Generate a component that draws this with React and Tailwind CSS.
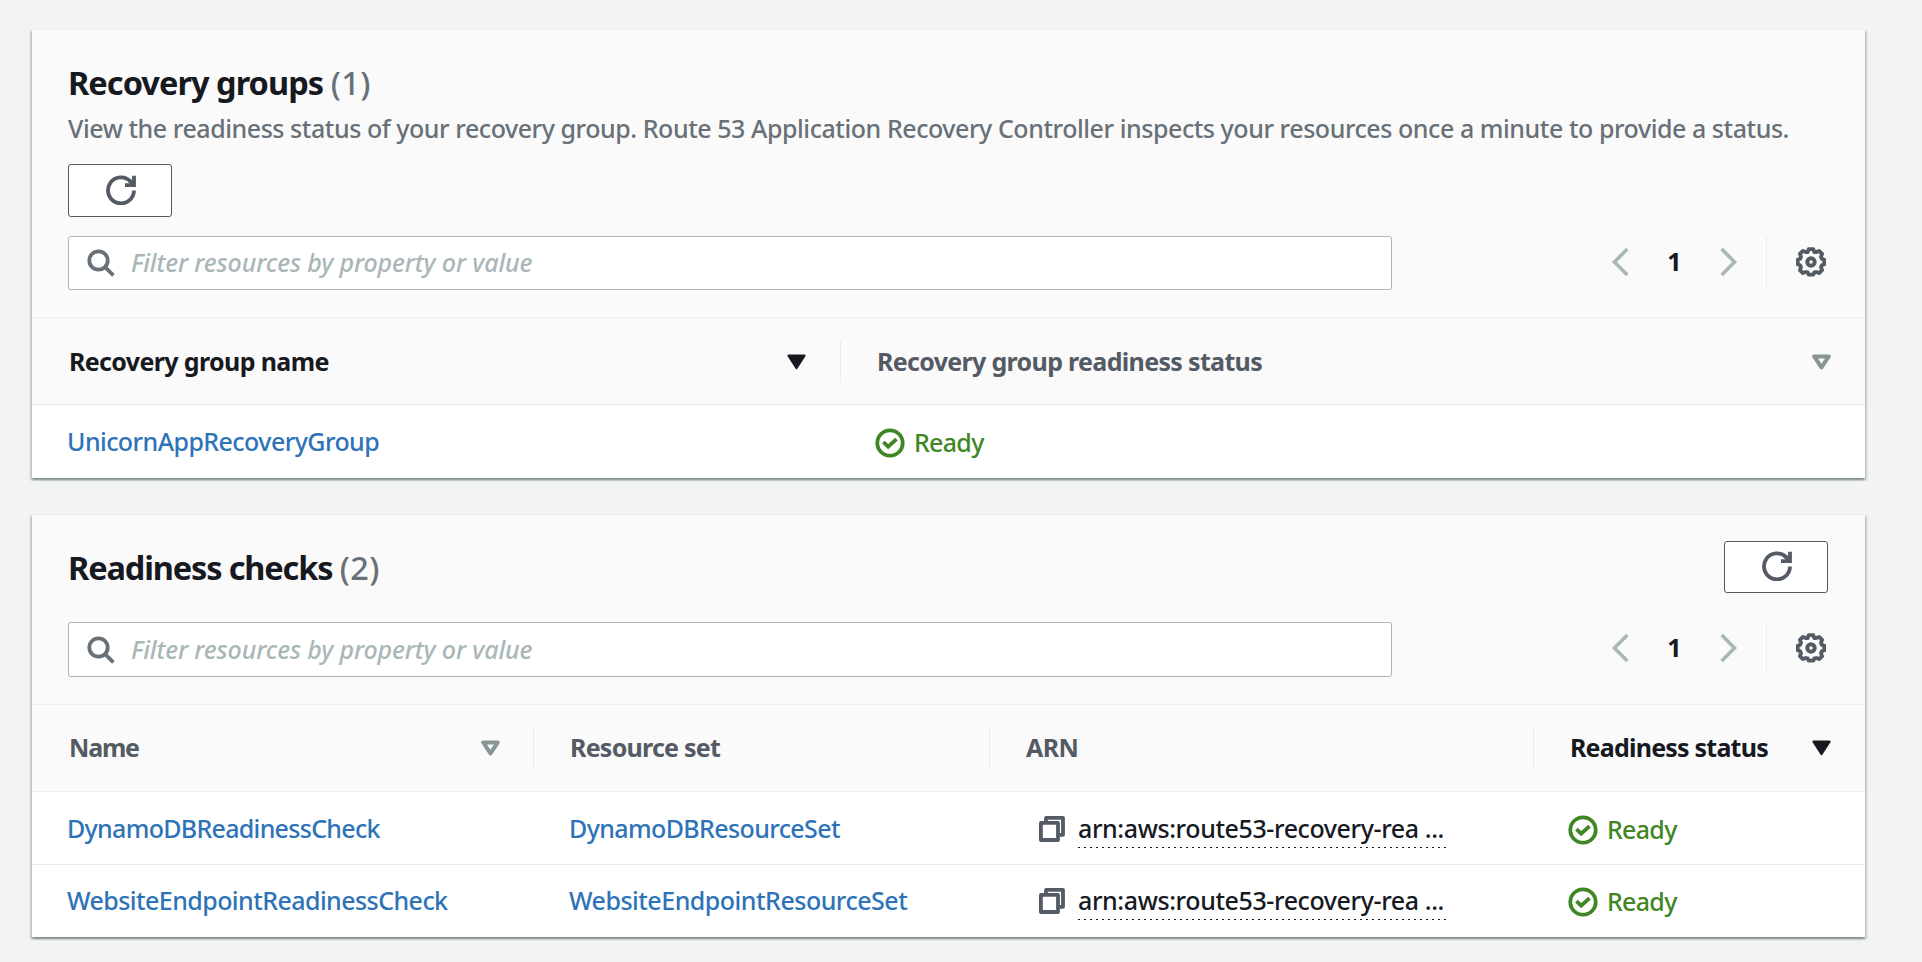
import React from "react";

function RefreshIcon() {
  return (
    <svg className="mb-px ml-px size-[30px]" viewBox="0 0 30 30" fill="none" stroke="#545b64" strokeWidth="3.8">
      <path d="M28 15.5A13 13 0 1 1 24.6 6.6" />
      <path d="M28 .8v9.4H19" />
      <path d="M23.4 5.2l4.3 4.6" />
    </svg>
  );
}

function SearchIcon() {
  return (
    <svg className="size-[28px] shrink-0" viewBox="0 0 28 28" fill="none" stroke="#687078" strokeWidth="3.8">
      <circle cx="11.5" cy="11.5" r="9.2" />
      <path d="M18 18l8.4 8.4" />
    </svg>
  );
}

function Chevron({ flip }) {
  return (
    <svg className="h-[30px] w-[18px]" viewBox="0 0 18 30" fill="none" stroke="#aab7b8" strokeWidth="3.6">
      <path d={flip ? "M1.7 2L14.5 15L1.7 28" : "M16.3 2L3.5 15L16.3 28"} />
    </svg>
  );
}

function GearIcon() {
  return (
    <svg className="size-[30px]" viewBox="0 0 30 30" fill="none" stroke="#545b64" strokeWidth="3.8" strokeLinejoin="round">
      <path d="M12.7 2.2h4.6l1 2.9 2-.1 2.8-1.1 3 3-1.1 2.8 .8 2.1 2.5 .9v4.6l-2.5 1-.8 2 1.1 2.8-3 3-2.8-1.1-2 .4-1 2.3h-4.6l-1-2.3-2-.4-2.8 1.1-3-3 1.1-2.8-.8-2-2.5-1v-4.6l2.5-.9.8-2.1-1.1-2.8 3-3 2.8 1.1 2 .1z" />
      <circle cx="15" cy="15" r="3.7" strokeWidth="4" />
    </svg>
  );
}

function SortIcon({ active }) {
  return active ? (
    <svg className="h-[16px] w-[19px] shrink-0" viewBox="0 0 19 16" fill="#16191f" stroke="#16191f" strokeWidth="2" strokeLinejoin="round">
      <path d="M1.4 1.6h16.2L9.5 14.3z" />
    </svg>
  ) : (
    <svg className="h-[16px] w-[19px] shrink-0" viewBox="0 0 19 16" fill="none" stroke="#879596" strokeWidth="4" strokeLinejoin="round">
      <path d="M2.2 2.4h14.6L9.5 13.4z" />
    </svg>
  );
}

function CheckIcon() {
  return (
    <svg className="size-[30px] shrink-0" viewBox="0 0 30 30" fill="none" stroke="#3f8624" strokeWidth="3.8">
      <circle cx="15" cy="15" r="12.7" />
      <path d="M8.4 14.1l4.8 4.6 8.3-7.6" strokeWidth="3.8" />
    </svg>
  );
}

function CopyIcon() {
  return (
    <svg className="size-[26px] shrink-0" viewBox="0 0 26 26" fill="none" stroke="#545b64" strokeWidth="3.8" strokeLinejoin="round">
      <path d="M7 6.6V1.9H24V18.8H19.4" />
      <path d="M1.9 6.9H19V24H1.9z" />
    </svg>
  );
}

function RefreshButton({ className }) {
  return (
    <button className={"flex w-[104px] items-center justify-center rounded-[3px] border border-[#545b64] bg-white " + className}>
      <RefreshIcon />
    </button>
  );
}

function FilterBar({ className = "", inputCls = "h-[54px]" }) {
  return (
    <div className={"flex items-start justify-between " + className}>
      <div className={"flex w-[1324px] items-center gap-[16px] rounded-[3px] border border-[#aab7b8] bg-white pl-[18px] " + inputCls}>
        <SearchIcon />
        <span className="text-[25px] font-medium italic tracking-[-0.13px] text-[#aab7b8]">Filter resources by property or value</span>
      </div>
      <div className="flex h-[52px] items-center pr-[3px]">
        <Chevron />
        <span className="w-[91px] text-center text-[25px] font-bold text-[#16191f]">1</span>
        <Chevron flip />
        <span className="ml-[28px] mr-[29px] h-[52px] w-px bg-[#eaeded]" />
        <GearIcon />
      </div>
    </div>
  );
}

function Card({ children, className = "" }) {
  return (
    <section className={"w-[1833px] bg-white shadow-[0_2px_2px_0_rgba(0,28,36,0.3),2px_2px_2px_0_rgba(0,28,36,0.15),-2px_2px_2px_0_rgba(0,28,36,0.15)] " + className}>
      {children}
    </section>
  );
}

function Th({ children, className = "", active, sortable, first }) {
  return (
    <div className={"flex h-[43px] items-center justify-between whitespace-nowrap text-[25px] font-bold " + (active ? "text-[#16191f] " : "text-[#545b64] ") + (first ? "pl-[37px] " : "border-l border-[#eaeded] pl-[36px] ") + className}>
      <span>{children}</span>
      {sortable && <SortIcon active={active} />}
    </div>
  );
}

function Link({ children, className = "" }) {
  return <a className={"whitespace-nowrap text-[25px] font-medium text-[#2e73b8] " + className}>{children}</a>;
}

function Ready() {
  return (
    <div className="flex items-center gap-[9px] pt-[3px] text-[#3f8624]">
      <CheckIcon />
      <span className="text-[25px] font-medium tracking-[-0.7px]">Ready</span>
    </div>
  );
}

const checks = [
  { name: "DynamoDBReadinessCheck", nameCls: "tracking-[-0.7px]", set: "DynamoDBResourceSet", setCls: "tracking-[-0.62px]", rowCls: "h-[73px] border-b border-[#eaeded] pt-px" },
  { name: "WebsiteEndpointReadinessCheck", nameCls: "tracking-[-0.56px]", set: "WebsiteEndpointResourceSet", setCls: "tracking-[-0.5px]", rowCls: "h-[72px] pb-px" },
];

export default function App() {
  return (
    <main className="flex h-[962px] w-full flex-col gap-[36px] overflow-hidden bg-[#f2f3f3] pl-[32px] pt-[29px] font-['Noto_Sans',sans-serif]">
      <Card>
        <header className="h-[289px] border-y border-[#eaeded] bg-[#fafafa] px-[36px] pt-[31px]">
          <h2 className="h-[44px] text-[32.5px]/[44px] font-bold tracking-[-0.95px] text-[#16191f]">
            Recovery groups <span className="font-medium tracking-[0.4px] text-[#687078]">(1)</span>
          </h2>
          <p className="mt-[5px] h-[36px] whitespace-nowrap text-[25px]/[36px] font-medium tracking-[-0.445px] text-[#687078]">
            View the readiness status of your recovery group. Route 53 Application Recovery Controller inspects your resources once a minute to provide a status.
          </p>
          <RefreshButton className="mt-[18px] h-[53px]" />
          <FilterBar className="mt-[19px]" />
        </header>
        <div className="flex h-[87px] items-center border-b border-[#eaeded] bg-[#fafafa] pt-px">
          <Th first active sortable className="w-[808px] pr-[34px] tracking-[-0.63px]">Recovery group name</Th>
          <Th sortable className="flex-1 pr-[34px] tracking-[-0.67px]">Recovery group readiness status</Th>
        </div>
        <div className="flex h-[73px] items-center pl-[35px]">
          <Link className="w-[808px] tracking-[-0.57px]">UnicornAppRecoveryGroup</Link>
          <Ready />
        </div>
      </Card>

      <Card>
        <header className="h-[191px] border-y border-[#eaeded] bg-[#fafafa] px-[36px] pt-[26px]">
          <div className="flex h-[53px] items-center justify-between">
            <h2 className="text-[32.5px]/[44px] font-bold tracking-[-1.14px] text-[#16191f]">
              Readiness checks <span className="font-medium tracking-[0.4px] text-[#687078]">(2)</span>
            </h2>
            <RefreshButton className="mb-[2px] mr-px h-[52px]" />
          </div>
          <FilterBar className="mt-[28px]" inputCls="h-[55px]" />
        </header>
        <div className="flex h-[87px] items-center border-b border-[#eaeded] bg-[#fafafa]">
          <Th first sortable className="w-[501px] pr-[33px] tracking-[-1.2px]">Name</Th>
          <Th className="w-[456px] tracking-[-0.75px]">Resource set</Th>
          <Th className="w-[544px] tracking-[-0.6px]">ARN</Th>
          <Th active sortable className="flex-1 pr-[34px] tracking-[-0.78px]">Readiness status</Th>
        </div>
        {checks.map((c) => (
          <div key={c.name} className={"flex items-center pl-[35px] " + c.rowCls}>
            <Link className={"w-[502px] " + c.nameCls}>{c.name}</Link>
            <Link className={"w-[470px] " + c.setCls}>{c.set}</Link>
            <div className="flex w-[529px] items-center gap-[13px]">
              <CopyIcon />
              <span className="relative whitespace-nowrap text-[25px] font-medium tracking-[-0.4px] text-[#16191f]">
                arn:aws:route53-recovery-rea ...
                <span className="absolute bottom-[-1px] left-0 h-px w-[368px] bg-[repeating-linear-gradient(90deg,#16191f_0_2px,transparent_2px_6px)]" />
              </span>
            </div>
            <Ready />
          </div>
        ))}
      </Card>
    </main>
  );
}
